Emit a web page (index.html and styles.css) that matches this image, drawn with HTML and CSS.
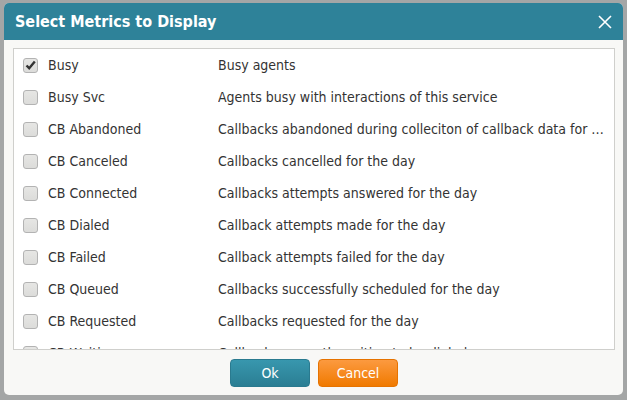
FILE: index.html
```html
<!DOCTYPE html>
<html>
<head>
<meta charset="utf-8">
<link rel="stylesheet" href="styles.css">
</head>
<body>
<div class="backdrop">
  <div class="dialog">
    <div class="header">
      <span class="title">Select Metrics to Display</span>
      <svg class="close" width="14" height="14" viewBox="0 0 14 14"><path d="M1 1L13 13M13 1L1 13" stroke="#fff" stroke-width="1.6" fill="none"/></svg>
    </div>
    <div class="body">
      <div class="list">
        <div class="row"><span class="cb checked"><svg width="11" height="10" viewBox="0 0 11 10"><path d="M1.5 5.5L4.2 8.2L9.8 1.5" stroke="#333" stroke-width="2.4" fill="none"/></svg></span><span class="name">Busy</span><span class="desc">Busy agents</span></div>
        <div class="row"><span class="cb"></span><span class="name">Busy Svc</span><span class="desc">Agents busy with interactions of this service</span></div>
        <div class="row"><span class="cb"></span><span class="name">CB Abandoned</span><span class="desc">Callbacks abandoned during colleciton of callback data for the day</span></div>
        <div class="row"><span class="cb"></span><span class="name">CB Canceled</span><span class="desc">Callbacks cancelled for the day</span></div>
        <div class="row"><span class="cb"></span><span class="name">CB Connected</span><span class="desc">Callbacks attempts answered for the day</span></div>
        <div class="row"><span class="cb"></span><span class="name">CB Dialed</span><span class="desc">Callback attempts made for the day</span></div>
        <div class="row"><span class="cb"></span><span class="name">CB Failed</span><span class="desc">Callback attempts failed for the day</span></div>
        <div class="row"><span class="cb"></span><span class="name">CB Queued</span><span class="desc">Callbacks successfully scheduled for the day</span></div>
        <div class="row"><span class="cb"></span><span class="name">CB Requested</span><span class="desc">Callbacks requested for the day</span></div>
        <div class="row"><span class="cb"></span><span class="name">CB Waiting</span><span class="desc">Callbacks currently waiting to be dialed</span></div>
      </div>
      <div class="buttons">
        <button class="btn ok">Ok</button>
        <button class="btn cancel">Cancel</button>
      </div>
    </div>
  </div>
</div>
</body>
</html>
```

FILE: styles.css
```css
html, body {
  margin: 0;
  padding: 0;
}
body {
  width: 627px;
  height: 400px;
  overflow: hidden;
  background: #a4a6a6;
  font-family: "DejaVu Sans Condensed", "DejaVu Sans", sans-serif;
}
.backdrop {
  padding: 3px 4px 0 4px;
}
.dialog {
  width: 619px;
  height: 392px;
  background: #f8f8f6;
  border-radius: 5px;
  overflow: hidden;
  display: flex;
  flex-direction: column;
}
.header {
  height: 37px;
  background: #2e8299;
  display: flex;
  align-items: center;
  justify-content: space-between;
  padding: 0 11px 0 11px;
  flex: none;
}
.title {
  color: #fff;
  font-size: 16px;
  font-weight: bold;
}
.close {
  display: block;
}
.body {
  flex: 1;
  padding: 8px 8px 0 9px;
  display: flex;
  flex-direction: column;
}
.list {
  height: 300px;
  border: 1px solid #cfcfcc;
  background: #fff;
  overflow: hidden;
  flex: none;
}
.row {
  height: 32px;
  display: flex;
  align-items: center;
  padding-left: 9px;
  padding-right: 7px;
  font-size: 14px;
  color: #333;
}
.cb {
  width: 13px;
  height: 13px;
  border: 1px solid #b3b3b3;
  border-radius: 3px;
  background: linear-gradient(#e6e6e4, #dcdcda);
  display: flex;
  align-items: center;
  justify-content: center;
  flex: none;
  margin-right: 10px;
}
.name {
  width: 170px;
  flex: none;
}
.desc {
  flex: 1;
  min-width: 0;
  white-space: nowrap;
  overflow: hidden;
  text-overflow: ellipsis;
}
.buttons {
  display: flex;
  justify-content: center;
  gap: 8px;
  margin-top: 9px;
}
.btn {
  width: 80px;
  height: 28px;
  border-radius: 4px;
  font-family: inherit;
  font-size: 14px;
  color: #fff;
  padding: 0;
}
.ok {
  background: linear-gradient(#3897ae, #2b7e93);
  border: 1px solid #2a7a8f;
}
.cancel {
  background: linear-gradient(#fc9a40, #f07a00);
  border: 1px solid #e67300;
}
```
